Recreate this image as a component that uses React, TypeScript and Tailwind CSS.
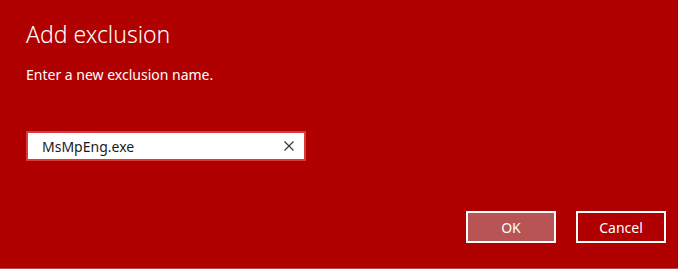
import React from "react";

export default function App() {
  return (
    <div
      className="w-[678px] h-[269px] bg-[#b00000] flex flex-col text-white border-b border-[#b94848]"
      style={{ fontFamily: '"Noto Sans", "Open Sans", sans-serif' }}
    >
      <div className="px-[26px] pt-[19px]">
        <h1 className="text-[23px] leading-[30px] font-light">Add exclusion</h1>
        <p className="mt-[16px] text-[14px] leading-[20px]">Enter a new exclusion name.</p>
        <div className="mt-[46px] w-[280px] h-[30px] bg-white border-2 border-[#d83b3b] flex items-center pl-[14px] pr-[8px]">
          <span className="flex-1 text-[14px] text-[#1a1a1a]">MsMpEng.exe</span>
          <svg width="10" height="10" viewBox="0 0 10 10" className="mr-[2px]">
            <path d="M0.5 0.5 L9.5 9.5 M9.5 0.5 L0.5 9.5" stroke="#333" strokeWidth="1.1" />
          </svg>
        </div>
      </div>
      <div className="mt-auto mb-[25px] flex justify-end gap-[20px] pr-[12px]">
        <button className="w-[90px] h-[32px] bg-[#b85454] border-2 border-white text-[14px] text-white">OK</button>
        <button className="w-[90px] h-[32px] bg-[#b00000] border-2 border-white text-[14px] text-white">Cancel</button>
      </div>
    </div>
  );
}
